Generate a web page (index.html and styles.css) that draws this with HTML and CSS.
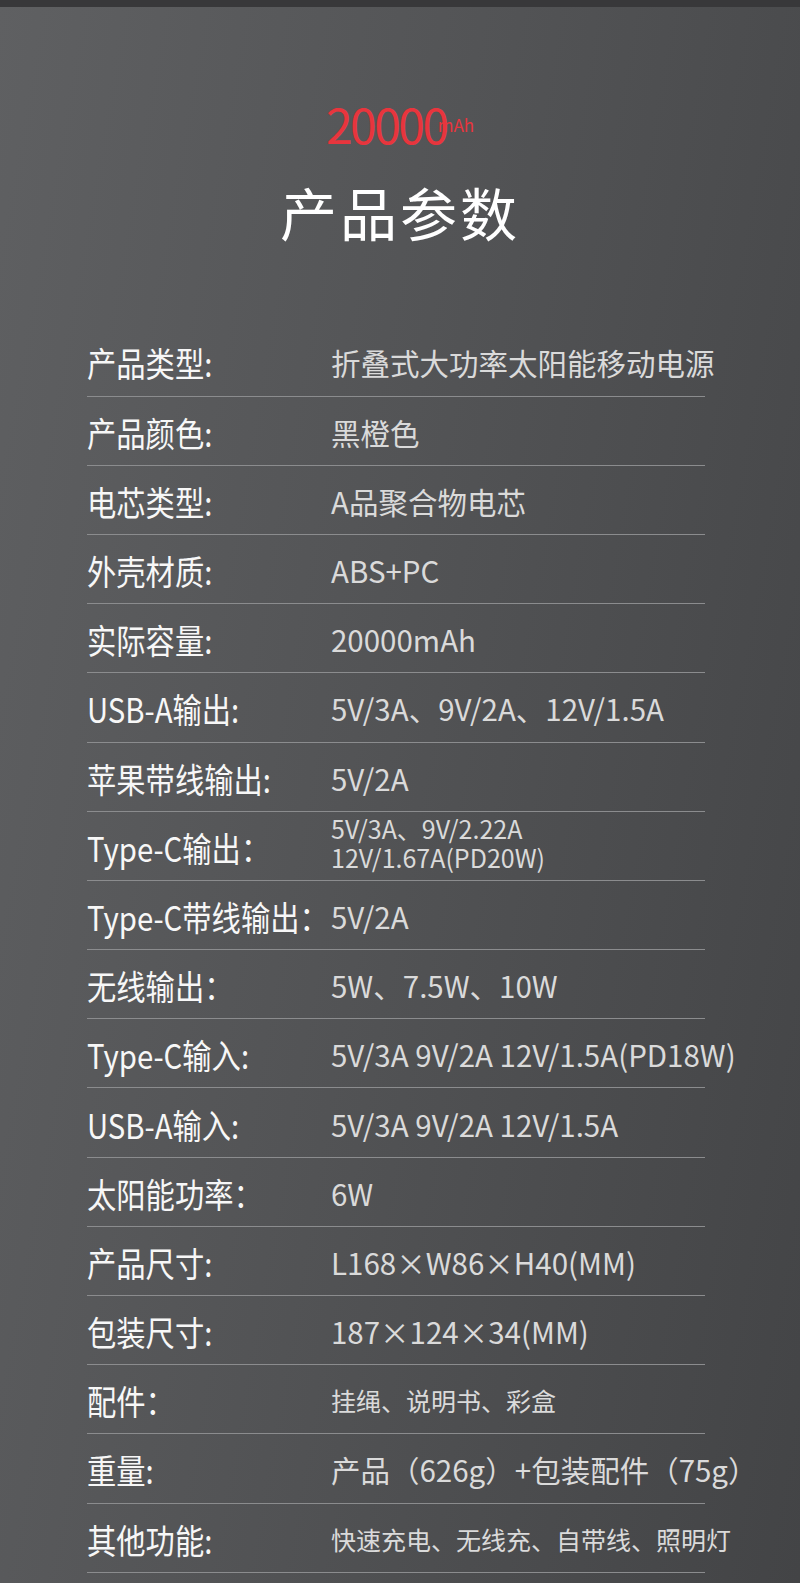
FILE: index.html
```html
<!DOCTYPE html>
<html lang="zh-CN">
<head>
<meta charset="utf-8">
<title>产品参数</title>
<link rel="stylesheet" href="styles.css">
</head>
<body>
<div class="page">
  <div class="topbar"></div>
  <header class="hero">
    <div class="capacity"><span class="num">20000</span><span class="unit">mAh</span></div>
    <h1 class="title">产品参数</h1>
  </header>
  <section class="specs">
    <div class="row"><span class="label">产品类型:</span><span class="value">折叠式大功率太阳能移动电源</span></div>
    <div class="row"><span class="label">产品颜色:</span><span class="value">黑橙色</span></div>
    <div class="row"><span class="label">电芯类型:</span><span class="value">A品聚合物电芯</span></div>
    <div class="row"><span class="label">外壳材质:</span><span class="value">ABS+PC</span></div>
    <div class="row"><span class="label">实际容量:</span><span class="value">20000mAh</span></div>
    <div class="row"><span class="label">USB-A输出:</span><span class="value">5V/3A、9V/2A、12V/1.5A</span></div>
    <div class="row"><span class="label">苹果带线输出:</span><span class="value">5V/2A</span></div>
    <div class="row"><span class="label">Type-C输出：</span><span class="value small two"><span class="line">5V/3A、9V/2.22A</span><span class="line">12V/1.67A(PD20W)</span></span></div>
    <div class="row"><span class="label">Type-C带线输出：</span><span class="value">5V/2A</span></div>
    <div class="row"><span class="label">无线输出：</span><span class="value">5W、7.5W、10W</span></div>
    <div class="row"><span class="label">Type-C输入:</span><span class="value">5V/3A 9V/2A 12V/1.5A(PD18W)</span></div>
    <div class="row"><span class="label">USB-A输入:</span><span class="value">5V/3A 9V/2A 12V/1.5A</span></div>
    <div class="row"><span class="label">太阳能功率：</span><span class="value">6W</span></div>
    <div class="row"><span class="label">产品尺寸:</span><span class="value">L168×W86×H40(MM)</span></div>
    <div class="row"><span class="label">包装尺寸:</span><span class="value">187×124×34(MM)</span></div>
    <div class="row"><span class="label">配件：</span><span class="value mid">挂绳、说明书、彩盒</span></div>
    <div class="row"><span class="label">重量:</span><span class="value">产品（626g）+包装配件（75g）</span></div>
    <div class="row"><span class="label">其他功能:</span><span class="value mid">快速充电、无线充、自带线、照明灯</span></div>
  </section>
</div>
</body>
</html>
```

FILE: styles.css
```css
html, body {
  margin: 0;
  padding: 0;
}
body {
  width: 800px;
  height: 1583px;
  overflow: hidden;
  font-family: "Noto Sans CJK SC", "Noto Sans", sans-serif;
  background: linear-gradient(100deg, #5f6062 0%, #535456 45%, #434446 100%);
}
.page {
  width: 800px;
  height: 1583px;
  display: flex;
  flex-direction: column;
}
.topbar {
  height: 7px;
  background: #38383a;
}
.hero {
  display: flex;
  flex-direction: column;
  align-items: center;
  padding-top: 92px;
}
.capacity {
  display: flex;
  align-items: baseline;
  color: #e8353d;
  line-height: 1;
}
.capacity .num {
  font-size: 48px;
  font-weight: 400;
  letter-spacing: -2.5px;
}
.capacity .unit {
  font-size: 17px;
  margin-left: -9px;
  position: relative;
  top: -12px;
}
.title {
  margin: 30px 0 0;
  font-size: 57px;
  font-weight: 400;
  color: #ffffff;
  letter-spacing: 3px;
  line-height: 1.2;
}
.specs {
  margin: 82px 95px 0 87px;
  display: flex;
  flex-direction: column;
}
.row {
  box-sizing: border-box;
  height: 69.2px;
  border-bottom: 1px solid #8b8c8e;
  display: flex;
  align-items: center;
  padding-top: 2px;
  white-space: nowrap;
}
.label {
  width: 244px;
  flex: none;
  font-size: 29.3px;
  color: #f7f7f7;
  display: inline-block;
  transform: scaleY(1.15);
}
.value {
  font-size: 29.5px;
  color: #dadada;
}
.value.mid {
  font-size: 25px;
}
.value.small {
  font-size: 25px;
}
.value.two {
  display: flex;
  flex-direction: column;
  margin-top: -8px;
}
.value.two .line {
  display: block;
  height: 29px;
  line-height: 29px;
}
```
